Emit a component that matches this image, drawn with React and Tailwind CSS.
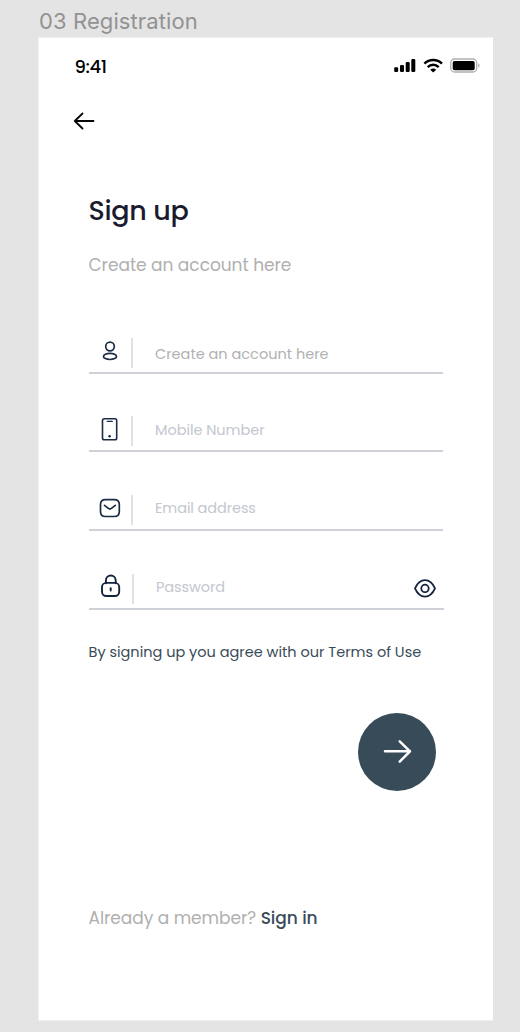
import React from "react";

function BackArrow() {
  return (
    <svg className="block h-5 w-6" viewBox="0 0 24 20" fill="none" stroke="#050507" strokeWidth="1.8" strokeLinecap="round" strokeLinejoin="round">
      <path d="M21.5 10H3M10.5 2.5L2.8 10l7.7 7.5" />
    </svg>
  );
}

function StatusIcons() {
  return (
    <svg className="block h-4 w-[87px]" viewBox="-0.7 -0.9 87 16">
      <g fill="#000">
        <rect x="0.5" y="9.3" width="4" height="4.7" rx="1.2" />
        <rect x="6.3" y="7" width="4" height="7" rx="1.2" />
        <rect x="12" y="4" width="4" height="10" rx="1.2" />
        <rect x="17.6" y="1" width="4" height="13" rx="1.2" />
      </g>
      <g fill="none" stroke="#000" strokeWidth="2.5">
        <path d="M30.7 5.7C35.6.9 43.4.9 48.3 5.7" />
        <path d="M34 9.2c3.1-3 7.9-3 11 0" />
      </g>
      <path d="M36.5 11.8c1.7-1.5 4.3-1.5 6 0l-3 2.9z" fill="#000" />
      <rect x="57" y="1.1" width="26" height="13" rx="3.8" fill="none" stroke="#b0b0b0" strokeWidth="1.3" />
      <rect x="59" y="3" width="22" height="9.3" rx="1.8" fill="#000" />
      <path d="M84.5 5.6c2 .7 2 3.5 0 4.2z" fill="#b4b4b4" />
    </svg>
  );
}

const iconClass = "block h-7 w-7";

function UserIcon() {
  return (
    <svg className={iconClass} viewBox="0 0 28 28" fill="none" stroke="#1c2c46" strokeWidth="1.7">
      <circle cx="14" cy="9.5" r="4.3" />
      <ellipse cx="14" cy="19.4" rx="6.5" ry="3.1" />
    </svg>
  );
}

function PhoneIcon() {
  return (
    <svg className={iconClass} viewBox="0 -1 28 28" fill="none" stroke="#1c2c46" strokeWidth="1.6" strokeLinecap="round">
      <rect x="6.5" y="2.8" width="14.2" height="21" rx="1.8" />
      <path d="M11.3 5.4h4.9" strokeWidth="1.3" />
      <circle cx="13.6" cy="20.3" r="1.3" fill="#1c2c46" stroke="none" />
    </svg>
  );
}

function MailIcon() {
  return (
    <svg className={iconClass} viewBox="0 -0.5 28 28" fill="none" stroke="#1c2c46" strokeWidth="1.7" strokeLinecap="round" strokeLinejoin="round">
      <path d="M9.5 5.100h8.800c3.400 0 5 1.700 5 5v6.800c0 3.400-1.600 5.100-5 5.100H9.500c-3.400 0-5-1.700-5-5.100v-6.800c0-3.300 1.600-5 5-5z" />
      <path d="M8.500 10.800l3.900 3.100c1 .8 2 .8 3 0l3.900-3.100" />
    </svg>
  );
}

function LockIcon() {
  return (
    <svg className={iconClass} viewBox="0 0.7 28 28" fill="none" stroke="#14233c" strokeWidth="1.9" strokeLinecap="round">
      <path d="M8.900 11V8.100a4.900 4.900 0 0 1 9.800 0V11" />
      <rect x="5" y="10.6" width="17.2" height="13.1" rx="4.2" />
      <path d="M13.7 16v2.300" />
    </svg>
  );
}

function EyeIcon() {
  return (
    <svg className="block h-6 w-6" viewBox="0 -0.4 24 24" fill="none" stroke="#14233c" strokeWidth="1.8">
      <path d="M2 12C4.400 6.600 8 3.800 12 3.800S19.600 6.600 22 12C19.600 17.400 16 20.200 12 20.200S4.400 17.400 2 12z" strokeLinejoin="round" />
      <circle cx="12" cy="12" r="3.7" />
    </svg>
  );
}

function Field({ icon, label, textClass, rowClass, shift, trailing }) {
  return (
    <div className={`flex items-start border-b-2 border-[#ced1d7] ${rowClass}`}>
      <div className={`flex h-full w-full items-start ${shift}`}>
        <div className="ml-[7px] w-[35.5px]">{icon}</div>
        <div className="mt-px h-[30px] w-[2px] bg-[#dfe1e6]" />
        <div className={`ml-[22px] whitespace-nowrap text-[14.5px] leading-5 ${textClass}`}>{label}</div>
        {trailing}
      </div>
    </div>
  );
}

export default function App() {
  return (
    <div className="h-[1032px] w-[520px] overflow-hidden bg-[#e4e4e4] pl-[38px] font-['Poppins','Inter',sans-serif]">
      <div className="flex h-[37px] items-end font-['Inter',sans-serif]">
        <div className="mb-[2px] ml-px whitespace-nowrap text-[22px] leading-[28px] tracking-[0.1px] text-[#929292]">03 Registration</div>
      </div>
      <main className="flex h-[984px] w-[455px] flex-col border-y border-l border-[#f1f1f1] bg-white">
        <header className="flex h-[60px] items-start justify-between pl-[35.5px] pr-[13px] pt-[19px]">
          <div className="text-[18px] font-medium leading-5 tracking-[-0.4px] text-black">9:41</div>
          <StatusIcons />
        </header>
        <button className="ml-[33px] mt-[13px] h-5 w-6" aria-label="Back"><BackArrow /></button>
        <div className="flex flex-col pl-[49.5px]">
          <h1 className="mt-[62px] h-9 text-[27px] font-medium leading-9 tracking-[-0.3px] text-[#1b1b2f]">Sign up</h1>
          <p className="mt-[24px] h-6 text-[17px] leading-6 tracking-[-0.03px] text-[#afafaf]">Create an account here</p>
          <div className="mt-[60px] flex flex-col">
            <Field icon={<UserIcon />} label="Create an account here" rowClass="h-[37px] w-[354px]" shift="" textClass="mt-[7px] text-[#b1b1b1]" />
            <Field icon={<PhoneIcon />} label="Mobile Number" rowClass="mt-[41px] h-[37px] w-[354px]" shift="" textClass="mt-[5px] tracking-[-0.05px] text-[#c3c7cf]" />
            <Field icon={<MailIcon />} label="Email address" rowClass="mt-[41px] h-[38px] w-[354px]" shift="pt-px" textClass="mt-[4px] tracking-[-0.1px] text-[#c3c7cf]" />
            <Field
              icon={<LockIcon />}
              label="Password"
              rowClass="mt-[41px] h-[38px] w-[355px]"
              shift="pl-px pt-px"
              textClass="mt-[4px] tracking-[-0.1px] text-[#c3c7cf]"
              trailing={<button className="ml-auto mr-[7px] mt-[3px] h-6 w-6" aria-label="Show password"><EyeIcon /></button>}
            />
          </div>
          <p className="mt-[30px] h-6 whitespace-nowrap text-[14.5px] leading-6 text-[#394b58]">By signing up you agree with our Terms of Use</p>
          <button className="ml-[269.5px] mt-[49px] flex h-[78px] w-[78px] items-center justify-center rounded-full bg-[#384b58]" aria-label="Sign up">
            <svg className="block h-7 w-8" viewBox="0 0 32 28" fill="none" stroke="#fff" strokeWidth="2.5" strokeLinecap="round" strokeLinejoin="round">
              <path d="M4 13.300H29M18.700 3.300L29 13.300 18.700 23.600" />
            </svg>
          </button>
          <p className="mt-[115px] h-6 whitespace-nowrap text-[17px] leading-6 tracking-[-0.05px] text-[#afafaf]">
            Already a member? <a className="font-medium text-[#394b58]">Sign in</a>
          </p>
        </div>
      </main>
    </div>
  );
}
